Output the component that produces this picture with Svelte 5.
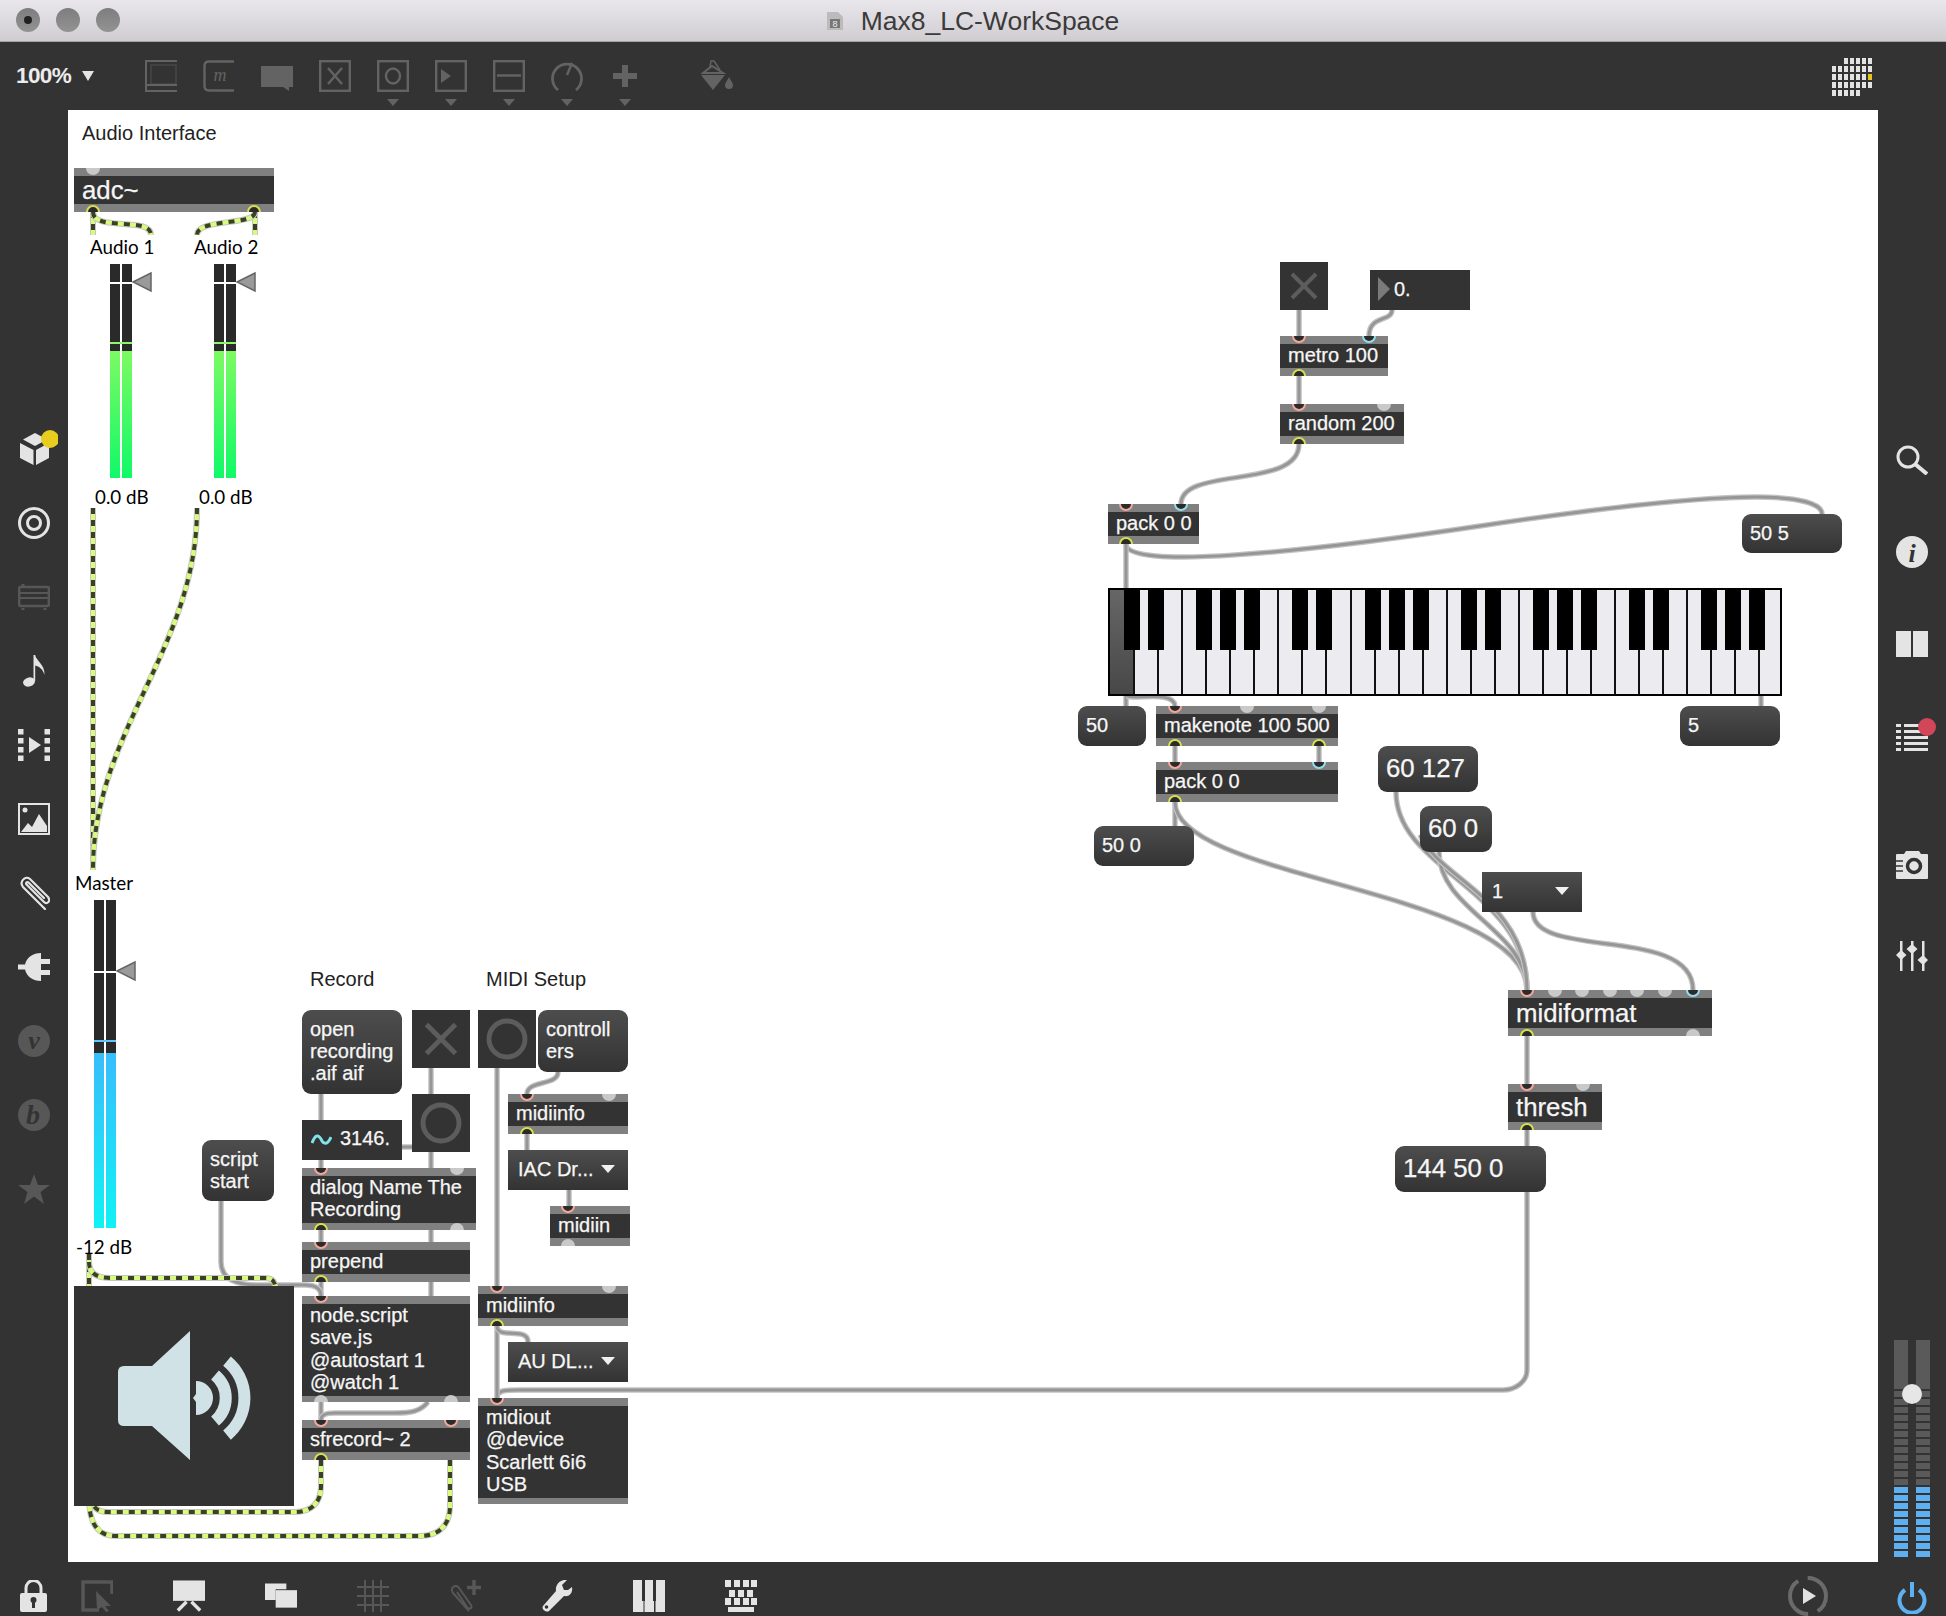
<script>
  // canvas starts at 68,110 on the page, all patcher coords below are page coords
  const OX = 68;
  const OY = 110;

  const boxes = [
    { t: 'adc~', x: 74, y: 168, w: 200, h: 44, big: true, ins: [[93, 'g']], outs: [[93, 'y'], [254, 'y']] },
    { t: 'metro 100', x: 1280, y: 336, w: 108, h: 40, ins: [[1299, 'p'], [1369, 'b']], outs: [[1299, 'y']] },
    { t: 'random 200', x: 1280, y: 404, w: 124, h: 40, ins: [[1299, 'p'], [1384, 'g']], outs: [[1299, 'y']] },
    { t: 'pack 0 0', x: 1108, y: 504, w: 91, h: 40, ins: [[1126, 'p'], [1181, 'b']], outs: [[1126, 'y']] },
    { t: 'makenote 100 500', x: 1156, y: 706, w: 182, h: 40, ins: [[1175, 'p'], [1247, 'g'], [1319, 'g']], outs: [[1175, 'y'], [1319, 'y']] },
    { t: 'pack 0 0', x: 1156, y: 762, w: 182, h: 40, ins: [[1175, 'p'], [1319, 'b']], outs: [[1175, 'y']] },
    { t: 'midiformat', x: 1508, y: 990, w: 204, h: 46, big: true, ins: [[1527, 'p'], [1555, 'g'], [1582, 'g'], [1610, 'g'], [1637, 'g'], [1665, 'g'], [1693, 'b']], outs: [[1527, 'y'], [1693, 'g']] },
    { t: 'thresh', x: 1508, y: 1084, w: 94, h: 46, big: true, ins: [[1527, 'p'], [1583, 'g']], outs: [[1527, 'y']] },
    { t: 'dialog Name The\nRecording', x: 302, y: 1168, w: 174, h: 62, ins: [[321, 'p'], [457, 'g']], outs: [[321, 'y'], [457, 'g']] },
    { t: 'prepend', x: 302, y: 1242, w: 168, h: 40, ins: [[321, 'p']], outs: [[321, 'y']] },
    { t: 'node.script\nsave.js\n@autostart 1\n@watch 1', x: 302, y: 1296, w: 168, h: 106, ins: [[321, 'p']], outs: [[321, 'g'], [451, 'g']] },
    { t: 'sfrecord~ 2', x: 302, y: 1420, w: 168, h: 40, ins: [[321, 'p'], [451, 'p']], outs: [[321, 'y']] },
    { t: 'midiinfo', x: 508, y: 1094, w: 120, h: 40, ins: [[527, 'p'], [609, 'g']], outs: [[527, 'y']] },
    { t: 'midiin', x: 550, y: 1206, w: 80, h: 40, ins: [[568, 'p']], outs: [[568, 'g']] },
    { t: 'midiinfo', x: 478, y: 1286, w: 150, h: 40, ins: [[497, 'p'], [609, 'g']], outs: [[497, 'y']] },
    { t: 'midiout\n@device\nScarlett 6i6\nUSB', x: 478, y: 1398, w: 150, h: 106, ins: [[497, 'p']], outs: [] }
  ];

  const messages = [
    { t: 'open\nrecording\n.aif aif', x: 302, y: 1010, w: 100, h: 84 },
    { t: 'controll\ners', x: 538, y: 1010, w: 90, h: 62 },
    { t: 'script\nstart', x: 202, y: 1140, w: 72, h: 61 },
    { t: '50 5', x: 1742, y: 514, w: 100, h: 39 },
    { t: '50', x: 1078, y: 706, w: 68, h: 40 },
    { t: '5', x: 1680, y: 706, w: 100, h: 40 },
    { t: '50 0', x: 1094, y: 826, w: 100, h: 40 },
    { t: '60 127', x: 1378, y: 746, w: 100, h: 46, big: true },
    { t: '60 0', x: 1420, y: 806, w: 72, h: 46, big: true },
    { t: '144 50 0', x: 1395, y: 1146, w: 151, h: 46, big: true }
  ];

  const menus = [
    { t: 'IAC Dr...', x: 508, y: 1150, w: 120, h: 40 },
    { t: 'AU DL...', x: 508, y: 1342, w: 120, h: 40 },
    { t: '1', x: 1482, y: 872, w: 100, h: 40 }
  ];

  const toggles = [
    { x: 412, y: 1010, s: 58 },
    { x: 1280, y: 262, s: 48 }
  ];
  const bangs = [
    { x: 478, y: 1010, s: 58 },
    { x: 412, y: 1094, s: 58 }
  ];

  const labels = [
    { t: 'Audio Interface', x: 82, y: 133 },
    { t: 'Record', x: 310, y: 979 },
    { t: 'MIDI Setup', x: 486, y: 979 },
    { t: 'Audio 1', x: 90, y: 247, gain: true },
    { t: 'Audio 2', x: 194, y: 247, gain: true },
    { t: '0.0 dB', x: 95, y: 497, gain: true },
    { t: '0.0 dB', x: 199, y: 497, gain: true },
    { t: 'Master', x: 75, y: 883, gain: true },
    { t: '-12 dB', x: 76, y: 1247, gain: true }
  ];

  const meters = [
    { x: 110, top: 264, bottom: 478, fill: 351, mark: 282, peak: 342, kind: 'green' },
    { x: 214, top: 264, bottom: 478, fill: 351, mark: 282, peak: 342, kind: 'green' },
    { x: 94, top: 900, bottom: 1228, fill: 1053, mark: 971, peak: 1040, kind: 'cyan' }
  ];

  const cords = [
    'M1299 310V336',
    'M1369 336C1369 315 1392 322 1392 310',
    'M1299 376V404',
    'M1299 444C1299 490 1181 466 1181 504',
    'M1126 544C1126 570 1300 553 1480 526C1620 505 1700 497 1757 497C1800 497 1822 504 1822 514',
    'M1126 544V706',
    'M1127 696C1135 700 1174 690 1175 706',
    'M1761 696V706',
    'M1175 746V762',
    'M1319 746V762',
    'M1175 802V830',
    'M1175 802C1175 880 1527 890 1527 990',
    'M1396 792C1396 870 1527 890 1527 990',
    'M1439 852C1439 910 1527 930 1527 990',
    'M1420 835C1440 880 1527 900 1527 990',
    'M1533 912C1533 960 1693 925 1693 990',
    'M1527 1036V1084',
    'M1527 1130V1370C1527 1382 1515 1390 1503 1390H520C505 1390 497 1390 497 1398',
    'M321 1094V1168',
    'M431 1068V1296',
    'M402 1147H412',
    'M321 1230V1242',
    'M321 1282V1296',
    'M221 1201V1262C221 1280 238 1285 258 1285H305C318 1285 321 1290 321 1296',
    'M321 1402V1420',
    'M428 1402C420 1412 410 1413 395 1413H335C325 1413 321 1415 321 1420',
    'M497 1068V1286',
    'M558 1072C558 1086 527 1080 527 1094',
    'M527 1134V1150',
    'M569 1190V1206',
    'M497 1326V1398',
    'M497 1326C497 1340 528 1326 528 1342'
  ];

  const signals = [
    'M93 212V235',
    'M93 212C93 232 151 216 151 235',
    'M255 212V235',
    'M255 212C255 226 197 218 197 235',
    'M93 508V870',
    'M197 508C197 650 93 730 93 870',
    'M89 1254V1296',
    'M89 1262C89 1274 98 1278 110 1278H264C273 1278 276 1280 276 1296',
    'M321 1460V1486C321 1504 310 1512 295 1512H108C98 1512 92 1508 92 1498',
    'M450 1460V1506C450 1526 438 1536 420 1536H116C98 1536 89 1524 89 1498'
  ];

  // black keys repeat over the 7 white keys of an octave
  const whiteW = 24.05;
  const whites = Array.from({ length: 28 }, (_, i) => i);
  const blacks = whites.filter((k) => [1, 2, 4, 5, 6].includes(k % 7));

  const railSegs = Array.from({ length: 21 }, (_, i) => i);
  const grid = [
    [0, 0, 1, 1, 1, 1, 1],
    [1, 1, 1, 1, 1, 1, 1],
    [1, 1, 1, 1, 1, 1, 2],
    [1, 1, 1, 1, 1, 1, 1],
    [1, 1, 1, 1, 1, 0, 0]
  ];
</script>

<div class="app">
  <header class="titlebar">
    <div class="lights">
      <span class="light"><i></i></span>
      <span class="light"></span>
      <span class="light"></span>
    </div>
    <div class="title">
      <svg class="docicon" viewBox="0 0 16 18" width="16" height="18">
        <path d="M0 0H11L16 5V18H0Z" fill="#bbb" />
        <rect x="3" y="7" width="10" height="9" fill="#777" />
        <text x="8" y="15" font-size="9" text-anchor="middle" fill="#eee" font-family="Liberation Sans">8</text>
      </svg>
      <span>Max8_LC-WorkSpace</span>
    </div>
  </header>

  <div class="toolbar">
    <div class="zoomlevel"><span>100%</span><i></i></div>
    <div class="tool">
      <svg viewBox="0 0 32 32" fill="none" stroke="currentColor" stroke-width="2">
        <path d="M6 5H31V24H6Z" stroke="#474747" stroke-width="1.500" />
        <path d="M1 0V32M1 1H32M1 25H32M1 31H32" />
      </svg>
    </div>
    <div class="tool">
      <svg viewBox="0 0 32 32" fill="none" stroke="currentColor" stroke-width="2.400">
        <path d="M31 1.5H6Q1.5 1.500 1.500 6V26Q1.500 30.500 6 30.500H31" />
        <text x="17" y="21" font-size="18" text-anchor="middle" font-style="italic" fill="currentColor" stroke="none" font-family="Liberation Serif">m</text>
      </svg>
    </div>
    <div class="tool">
      <svg viewBox="0 0 32 32" fill="currentColor"><path d="M0 6H32V27H28V31L22 27H0Z" /></svg>
    </div>
    <div class="tool">
      <svg viewBox="0 0 32 32" fill="none" stroke="currentColor" stroke-width="2.400">
        <rect x="1.200" y="1.200" width="29.600" height="29.600" />
        <path d="M9 8L23 24M23 8L9 24" />
      </svg>
    </div>
    <div class="tool">
      <svg viewBox="0 0 32 32" fill="none" stroke="currentColor" stroke-width="2.400">
        <rect x="1.200" y="1.200" width="29.600" height="29.600" />
        <ellipse cx="16" cy="16" rx="7" ry="7.500" />
      </svg>
      <i class="caret"></i>
    </div>
    <div class="tool">
      <svg viewBox="0 0 32 32" fill="none" stroke="currentColor" stroke-width="2.400">
        <rect x="1.200" y="1.200" width="29.600" height="29.600" />
        <path d="M6 9L16 16L6 23Z" fill="currentColor" stroke="none" />
      </svg>
      <i class="caret"></i>
    </div>
    <div class="tool">
      <svg viewBox="0 0 32 32" fill="none" stroke="currentColor" stroke-width="2.400">
        <rect x="1.200" y="1.200" width="29.600" height="29.600" />
        <path d="M4 15.500H28" />
      </svg>
      <i class="caret"></i>
    </div>
    <div class="tool">
      <svg viewBox="0 0 32 32" fill="none" stroke="currentColor" stroke-width="2.800">
        <path d="M7 30A14.500 14.500 0 1 1 25 30" />
        <path d="M16 15L21 3" stroke-width="2.400" />
      </svg>
      <i class="caret"></i>
    </div>
    <div class="tool">
      <svg viewBox="0 0 32 32" fill="currentColor"><path d="M13 5H19V13H28V19H19V27H13V19H4V13H13Z" /></svg>
      <i class="caret"></i>
    </div>
    <div class="tool bucket">
      <svg viewBox="0 0 32 32">
        <path d="M0 15L12 30L24 15Z" fill="currentColor" />
        <path d="M2 13L11 6L22 13Z" fill="none" stroke="currentColor" stroke-width="2" />
        <path d="M9 7L10 1L13 1L19 10" fill="none" stroke="currentColor" stroke-width="1.500" />
        <path d="M28 17C30 21 32 23 32 25A4 4 0 0 1 24 25C24 23 26 21 28 17Z" fill="currentColor" />
      </svg>
    </div>
    <div class="gridmeter">
      {#each grid as row}
        <div class="gridrow">
          {#each row as cell}
            <span class="cell" class:off={cell === 0} class:hot={cell === 2}></span>
          {/each}
        </div>
      {/each}
    </div>
  </div>

  <div class="middle">
    <nav class="rail left">
      <div class="slot">
        <svg width="48" height="48" viewBox="0 0 48 48" fill="currentColor">
          <path d="M25 8L37 14.500L25 21L13 14.500Z" />
          <path d="M10 18L23.500 25V40L10 33Z" />
          <path d="M39 18L26 25V40L39 33Z" />
          <circle cx="40" cy="14" r="9" fill="#e8cc1f" />
        </svg>
      </div>
      <div class="slot">
        <svg width="32" height="32" viewBox="0 0 32 32" fill="none" stroke="currentColor" stroke-width="3">
          <circle cx="16" cy="16" r="14.500" />
          <circle cx="16" cy="16" r="6.500" />
        </svg>
      </div>
      <div class="slot dim">
        <svg width="32" height="26" viewBox="0 0 32 26" fill="none" stroke="currentColor" stroke-width="2.400">
          <rect x="1.200" y="3" width="29.600" height="19" rx="1" />
          <path d="M1 9H31M1 14H31" stroke-width="1.800" />
          <path d="M5 2V0M5 26V24M27 26V24" stroke-width="3" />
        </svg>
      </div>
      <div class="slot">
        <svg width="22" height="32" viewBox="0 0 22 32" fill="currentColor">
          <ellipse cx="6" cy="27" rx="6" ry="4.500" transform="rotate(-15 6 27)" />
          <path d="M10.500 26V0H12.200C13 6 22 9 21.500 20C20 14 16 11.500 12.200 10.500V26Z" />
        </svg>
      </div>
      <div class="slot">
        <svg width="32" height="32" viewBox="0 0 32 32" fill="currentColor">
          <path d="M0 0h5.500v5.500H0ZM0 9h5.500v5.500H0ZM0 18h5.500v5.500H0ZM0 26.500h5.500V32H0Z" />
          <path d="M26.500 0H32v5.500h-5.500ZM26.500 9H32v5.500h-5.500ZM26.500 18H32v5.500h-5.500ZM26.500 26.500H32V32h-5.500Z" />
          <path d="M11 8L23 16L11 24Z" />
        </svg>
      </div>
      <div class="slot">
        <svg width="32" height="32" viewBox="0 0 32 32">
          <rect x="1" y="1" width="30" height="30" fill="none" stroke="currentColor" stroke-width="2" />
          <circle cx="7" cy="7" r="2.500" fill="currentColor" />
          <path d="M3 29L10 20L14 24L21 11L29 23V29Z" fill="currentColor" />
        </svg>
      </div>
      <div class="slot">
        <svg width="32" height="34" viewBox="0 0 32 34" fill="none" stroke="currentColor" stroke-width="2.200">
          <path d="M27 33L5 11C1 6 7 -1 12 3L30 21C33 25 29 29 26 26L9 9C7 7 9 5 11 7L26 22" stroke-linecap="round" />
        </svg>
      </div>
      <div class="slot">
        <svg width="32" height="32" viewBox="0 0 32 32" fill="currentColor">
          <path d="M0 13.500H7C9 6 15 2 23 2V8H32V13H23V19H32V24H23V30C15 30 9 26 7 18.500H0Z" />
        </svg>
      </div>
      <div class="slot dim">
        <svg width="32" height="32" viewBox="0 0 32 32">
          <circle cx="16" cy="16" r="16" fill="currentColor" />
          <text x="16" y="24" font-size="26" font-weight="700" font-style="italic" text-anchor="middle" fill="#333" font-family="Liberation Serif">v</text>
        </svg>
      </div>
      <div class="slot dim">
        <svg width="32" height="32" viewBox="0 0 32 32">
          <circle cx="16" cy="16" r="16" fill="currentColor" />
          <text x="15" y="25" font-size="28" font-weight="700" font-style="italic" text-anchor="middle" fill="#333" font-family="Liberation Serif">b</text>
        </svg>
      </div>
      <div class="slot dim">
        <svg width="32" height="30" viewBox="0 0 32 30" fill="currentColor">
          <path d="M16 0L20 11H32L22.500 18L26 30L16 22.500L6 30L9.500 18L0 11H12Z" />
        </svg>
      </div>
    </nav>

    <main class="canvas">
      {#each labels as l}
        <span class="label" class:gain={l.gain} style="left:{l.x - OX}px;top:{l.y - OY}px">{l.t}</span>
      {/each}

      <svg class="cords" viewBox="{OX} {OY} 1810 1452" fill="none">
        {#each cords as d}
          <path {d} stroke="#c2c2c2" stroke-width="5.500" />
          <path {d} stroke="#969696" stroke-width="3" />
        {/each}
        {#each signals as d}
          <path {d} stroke="#c6c6c6" stroke-width="6" />
          <path {d} stroke="#d8fb7d" stroke-width="4" />
          <path {d} stroke="#3a4026" stroke-width="4" stroke-dasharray="6 6" />
        {/each}
      </svg>

      {#each meters as m}
        <div class="meter" style="left:{m.x - OX}px;top:{m.top - OY}px;height:{m.bottom - m.top}px">
          <div class="bar"><div class="fill {m.kind}" style="height:{m.bottom - m.fill}px"></div></div>
          <div class="bar"><div class="fill {m.kind}" style="height:{m.bottom - m.fill}px"></div></div>
          <i class="mark" style="top:{m.mark - m.top}px"></i>
          <i class="peak {m.kind}" style="top:{m.peak - m.top}px"></i>
          <svg class="thumb" style="top:{m.mark - m.top - 11}px" width="20" height="22" viewBox="0 0 20 22">
            <path d="M1 11L19 2V20Z" fill="#9a9a9a" stroke="#666" stroke-width="1.500" />
          </svg>
        </div>
      {/each}

      {#each boxes as b}
        <div class="box" class:big={b.big} style="left:{b.x - OX}px;top:{b.y - OY}px;width:{b.w}px;height:{b.h}px">
          <div class="boxtext">{b.t}</div>
          {#each b.ins as [px, c]}
            <i class="port in {c}" style="left:{px - b.x}px"></i>
          {/each}
          {#each b.outs as [px, c]}
            <i class="port out {c}" style="left:{px - b.x}px"></i>
          {/each}
        </div>
      {/each}

      {#each messages as m}
        <div class="msg" class:big={m.big} style="left:{m.x - OX}px;top:{m.y - OY}px;width:{m.w}px;height:{m.h}px">{m.t}</div>
      {/each}

      {#each menus as m}
        <div class="menu" style="left:{m.x - OX}px;top:{m.y - OY}px;width:{m.w}px;height:{m.h}px">
          <span>{m.t}</span><i></i>
        </div>
      {/each}

      {#each toggles as g}
        <div class="square" style="left:{g.x - OX}px;top:{g.y - OY}px;width:{g.s}px;height:{g.s}px">
          <svg viewBox="0 0 100 100"><path d="M25 25L75 75M75 25L25 75" stroke="#5c5c5c" stroke-width="8.500" /></svg>
        </div>
      {/each}
      {#each bangs as g}
        <div class="square" style="left:{g.x - OX}px;top:{g.y - OY}px;width:{g.s}px;height:{g.s}px">
          <svg viewBox="0 0 100 100"><circle cx="50" cy="50" r="31" fill="none" stroke="#5c5c5c" stroke-width="8.500" /></svg>
        </div>
      {/each}

      <div class="flonum" style="left:{1370 - OX}px;top:{270 - OY}px">
        <i></i><span>0.</span>
      </div>

      <div class="signum" style="left:{302 - OX}px;top:{1120 - OY}px">
        <svg width="21" height="14" viewBox="0 0 21 14" fill="none" stroke="#7fe3ea" stroke-width="3">
          <path d="M1 10C4 2 7 1 10 6C12 11 16 13 20 4" />
        </svg>
        <span>3146.</span>
      </div>

      <div class="keys" style="left:{1108 - OX}px;top:{588 - OY}px">
        <div class="pressed"></div>
        {#each whites as k}
          {#if k > 0}<i class="wline" style="left:{k * whiteW - 1}px"></i>{/if}
        {/each}
        {#each blacks as k}
          <i class="bkey" style="left:{k * whiteW - 10}px"></i>
        {/each}
      </div>

      <div class="dac" style="left:{74 - OX}px;top:{1286 - OY}px">
        <svg width="220" height="220" viewBox="0 0 220 220" fill="none">
          <path d="M78 80L116 45V174L78 140H50Q44 140 44 134V86Q44 80 50 80Z" fill="#d0e2e6" />
          <path d="M153 75A48 48 0 0 1 153 149" stroke="#d0e2e6" stroke-width="12" />
          <path d="M141 89A30 30 0 0 1 141 135" stroke="#d0e2e6" stroke-width="12" />
          <path d="M122 95A17 17 0 0 1 122 129L122 116L119 112L122 108Z" fill="#d0e2e6" />
        </svg>
      </div>
    </main>

    <aside class="rail right">
      <div class="rslot">
        <svg width="32" height="30" viewBox="0 0 32 30" fill="none" stroke="currentColor" stroke-width="3">
          <circle cx="12" cy="12" r="10" />
          <path d="M19 19L31 29" stroke-width="4" />
        </svg>
      </div>
      <div class="rslot">
        <svg width="32" height="32" viewBox="0 0 32 32">
          <circle cx="16" cy="16" r="16" fill="currentColor" />
          <text x="16" y="26" font-size="26" font-weight="700" font-style="italic" text-anchor="middle" fill="#333" font-family="Liberation Serif">i</text>
        </svg>
      </div>
      <div class="rslot">
        <svg width="32" height="26" viewBox="0 0 32 26" fill="currentColor">
          <rect x="0" y="0" width="15" height="26" />
          <rect x="17" y="0" width="15" height="26" />
        </svg>
      </div>
      <div class="rslot badge">
        <svg width="40" height="36" viewBox="0 0 40 36" fill="currentColor">
          <path d="M0 6h5v3H0ZM0 12h5v3H0ZM0 18h5v3H0ZM0 24h5v3H0ZM0 30h5v3H0Z" />
          <path d="M8 6h24v3H8ZM8 12h24v3H8ZM8 18h24v3H8ZM8 24h24v3H8ZM8 30h24v3H8Z" />
          <circle cx="31" cy="9" r="9" fill="#d2465a" />
        </svg>
      </div>
      <div class="rslot spaced">
        <svg width="32" height="32" viewBox="0 0 32 32">
          <path d="M1 6H8L10 3H23L25 6H31Q32 6 32 7V30Q32 31 31 31H1Q0 31 0 30V7Q0 6 1 6Z" fill="currentColor" />
          <circle cx="18" cy="18" r="6.500" fill="none" stroke="#333" stroke-width="3.500" />
          <path d="M0 13H7M0 18H7M0 23H7" stroke="#333" stroke-width="1.500" />
        </svg>
      </div>
      <div class="rslot">
        <svg width="32" height="30" viewBox="0 0 32 30" fill="currentColor">
          <path d="M4 0h2.500v30H4ZM15 0h2.500v30H15ZM26 0h2.500v30H26Z" />
          <path d="M5 9L10.500 14L5 19L0 14ZM16 3L21.500 8L16 13L10.500 8ZM27 14L32 19L27 24L21.500 19Z" />
        </svg>
      </div>
      <div class="levels">
        <div class="lvcol">
          <div class="lvtop"></div>
          {#each railSegs as i}
            <span class="seg" class:lit={i >= 12}></span>
          {/each}
        </div>
        <div class="lvcol">
          <div class="lvtop"></div>
          {#each railSegs as i}
            <span class="seg" class:lit={i >= 12}></span>
          {/each}
        </div>
        <i class="knob"></i>
      </div>
    </aside>
  </div>

  <footer class="bottombar">
    <div class="bt lock">
      <svg width="27" height="32" viewBox="0 0 27 32">
        <path d="M6 14V8A7.500 7.500 0 0 1 21 8V14" fill="none" stroke="currentColor" stroke-width="3" />
        <rect x="0" y="13" width="27" height="19" rx="2" fill="currentColor" />
        <circle cx="13.500" cy="20" r="3" fill="#333" />
        <rect x="12" y="20" width="3" height="8" fill="#333" />
      </svg>
    </div>
    <div class="bt dim">
      <svg width="32" height="32" viewBox="0 0 32 32">
        <path d="M31 14V2H2V30H18" fill="none" stroke="currentColor" stroke-width="3.500" />
        <path d="M15 11L30 26H24L28 31L25 32L21 27L16 30Z" fill="currentColor" />
      </svg>
    </div>
    <div class="bt">
      <svg width="32" height="32" viewBox="0 0 33 32">
        <rect x="0" y="0" width="33" height="21" fill="currentColor" />
        <path d="M14 22L5 31M19 22L28 31" stroke="currentColor" stroke-width="3.500" />
      </svg>
    </div>
    <div class="bt">
      <svg width="32" height="32" viewBox="0 0 33 32" fill="currentColor">
        <path d="M0 3H22V9H11V20H0Z" />
        <rect x="11" y="10" width="22" height="18" />
      </svg>
    </div>
    <div class="bt dim">
      <svg width="32" height="32" viewBox="0 0 32 32" stroke="currentColor" stroke-width="2">
        <path d="M8 0V32M16 0V32M24 0V32M0 7H32M0 16H32M0 25H32" />
      </svg>
    </div>
    <div class="bt dim">
      <svg width="32" height="32" viewBox="0 0 32 32" fill="none" stroke="currentColor" stroke-width="2">
        <path d="M20 31L4 13C0 8 7 3 10 8L22 25C24 28 20 30 18 27L8 12" />
        <path d="M25 0V15M18 7.500H32" stroke-width="3.500" />
      </svg>
    </div>
    <div class="bt">
      <svg width="32" height="32" viewBox="0 0 32 32" fill="currentColor">
        <path d="M31 7C32 12 29 17 23 16L8 31C5 33 0 29 2 26L15 11C14 5 19 -1 26 0L21 5L23 10L27 10Z" />
        <circle cx="5.500" cy="27" r="1.800" fill="#333" />
      </svg>
    </div>
    <div class="bt">
      <svg width="32" height="32" viewBox="0 0 32 32" fill="currentColor">
        <path d="M0 0H9V21H10.500V32H0ZM12 0H20V21H21V32H11.500V21H12ZM23 0H32V32H22.500V21H23Z" />
      </svg>
    </div>
    <div class="bt">
      <svg width="32" height="32" viewBox="0 0 32 32" fill="currentColor">
        <path d="M0 0h6v7H0ZM9 0h6v7H9ZM18 0h6v7h-6ZM26 0h6v7h-6Z" />
        <path d="M4 10h6v7H4ZM13 10h6v7h-6ZM22 10h6v7h-6Z" />
        <path d="M0 18h6v7H0ZM9 18h6v7H9ZM18 18h6v7h-6ZM26 18h6v7h-6Z" />
        <path d="M3 27h26v5H3Z" />
      </svg>
    </div>
    <div class="bt play">
      <svg width="42" height="42" viewBox="0 0 42 42" fill="none">
        <path d="M21 3A18 18 0 0 1 39 21A18 18 0 0 1 21 39A18 18 0 0 1 3 21A18 18 0 0 1 21 3" stroke="#6a6a6a" stroke-width="4" stroke-dasharray="46 10" />
        <path d="M16 13L29 21L16 29Z" fill="#e2e2e2" />
      </svg>
    </div>
    <div class="bt power">
      <svg width="30" height="32" viewBox="0 0 30 32" fill="none" stroke="#5fb0f0" stroke-width="4">
        <path d="M8 8A12.500 12.500 0 1 0 22 8" />
        <path d="M15 0V15" />
      </svg>
    </div>
  </footer>
</div>

<style>
  :global(body) {
    margin: 0;
    background: #333;
  }

  .app {
    width: 1946px;
    height: 1616px;
    display: flex;
    flex-direction: column;
    background: #333;
    font-family: 'Liberation Sans', Arial, sans-serif;
    overflow: hidden;
  }

  .titlebar {
    height: 41px;
    flex: none;
    position: relative;
    display: flex;
    align-items: center;
    justify-content: center;
    background: linear-gradient(#e9e7ec, #cfcdd0);
    border-bottom: 1px solid #a3a3a3;
  }
  .lights {
    position: absolute;
    left: 16px;
    top: 8px;
    display: flex;
    gap: 16px;
  }
  .light {
    width: 24px;
    height: 24px;
    border-radius: 50%;
    background: linear-gradient(#7d7d7d, #939393);
    display: flex;
    align-items: center;
    justify-content: center;
  }
  .light i {
    width: 8px;
    height: 8px;
    border-radius: 50%;
    background: #222;
  }
  .title {
    display: flex;
    align-items: center;
    gap: 18px;
    font-size: 26.5px;
    color: #3b3b3b;
    margin-top: 1px;
  }

  .toolbar {
    height: 68px;
    flex: none;
    display: flex;
    padding-top: 18px;
    box-sizing: border-box;
    color: #636363;
    gap: 26px;
    position: relative;
  }
  .zoomlevel {
    width: 145px;
    margin-right: -26px;
    box-sizing: border-box;
    padding-left: 16px;
    display: flex;
    align-items: center;
    height: 32px;
    color: #ececec;
    font-size: 22.500px;
    font-weight: 700;
    letter-spacing: -0.6px;
  }
  .zoomlevel i {
    margin-left: 11px;
    border-left: 6px solid transparent;
    border-right: 6px solid transparent;
    border-top: 10px solid #e4e4e4;
  }
  .tool {
    width: 32px;
    height: 32px;
    position: relative;
  }
  .tool svg {
    display: block;
    width: 32px;
    height: 32px;
  }
  .caret {
    position: absolute;
    left: 10px;
    top: 39px;
    border-left: 6px solid transparent;
    border-right: 6px solid transparent;
    border-top: 7px solid #636363;
  }
  .bucket {
    margin-left: 34px;
  }
  .gridmeter {
    margin-left: auto;
    margin-right: 74px;
    margin-top: -2px;
    display: flex;
    flex-direction: column;
    gap: 2px;
  }
  .gridrow {
    display: flex;
    gap: 2px;
  }
  .cell {
    width: 4px;
    height: 6px;
    background: #e2e2e2;
  }
  .cell.off {
    background: transparent;
  }
  .cell.hot {
    background: #e8c21f;
  }

  .middle {
    flex: 1;
    display: flex;
    min-height: 0;
  }
  .rail {
    width: 68px;
    flex: none;
    display: flex;
    flex-direction: column;
    align-items: center;
    color: #e4e4e4;
    box-sizing: border-box;
  }
  .rail.left {
    padding-top: 302px;
  }
  .rail.right {
    padding-top: 304px;
  }
  .slot {
    height: 74px;
    flex: none;
    display: flex;
    align-items: center;
    justify-content: center;
  }
  .slot.dim,
  .bt.dim {
    color: #575757;
  }
  .rslot {
    height: 92px;
    flex: none;
    display: flex;
    align-items: center;
    justify-content: center;
  }
  .rslot.badge svg {
    margin-left: 8px;
  }
  .rslot.spaced {
    margin-top: 36px;
  }

  .canvas {
    flex: 1;
    position: relative;
    background: #fff;
    overflow: hidden;
  }
  .cords {
    position: absolute;
    inset: 0;
    width: 100%;
    height: 100%;
  }
  .label {
    position: absolute;
    transform: translateY(-50%);
    font-size: 20px;
    line-height: 24px;
    color: #222;
    white-space: nowrap;
  }
  .label.gain {
    font-family: Lato, sans-serif;
    font-size: 18.800px;
    color: #000;
  }

  .box {
    position: absolute;
    display: flex;
    flex-direction: column;
    background: #808080;
    overflow: hidden;
    color: #f6f6f6;
    font-size: 20px;
  }
  .box.big,
  .msg.big {
    font-size: 25.800px;
  }
  .boxtext {
    flex: 1;
    margin: 8px 0;
    padding: 0 8px 2px;
    background: #333;
    display: flex;
    align-items: center;
    white-space: pre;
    line-height: 22.400px;
    -webkit-text-stroke: 0.25px #f6f6f6;
  }
  .box.big .boxtext {
    padding-bottom: 0;
  }
  .port {
    position: absolute;
    box-sizing: border-box;
    width: 14px;
    height: 14px;
    margin-left: -7px;
    border-radius: 50%;
    background: #2b2b2b;
    border: 2px solid #f2a89a;
  }
  .port.in {
    top: -7px;
  }
  .port.out {
    bottom: -7px;
  }
  .port.b {
    border-color: #95dcec;
  }
  .port.y {
    border-color: #d8e04e;
  }
  .port.g {
    background: #c9c9c9;
    border-color: #c9c9c9;
  }

  .msg {
    position: absolute;
    box-sizing: border-box;
    padding: 0 8px 2px;
    display: flex;
    align-items: center;
    border-radius: 9px;
    background: linear-gradient(#4d4d4d, #333);
    color: #f6f6f6;
    font-size: 20px;
    line-height: 22px;
    white-space: pre;
    -webkit-text-stroke: 0.25px #f6f6f6;
  }
  .menu {
    position: absolute;
    box-sizing: border-box;
    padding: 0 13px 2px 10px;
    display: flex;
    align-items: center;
    justify-content: space-between;
    background: linear-gradient(#4d4d4d, #333);
    color: #f6f6f6;
    font-size: 20px;
    -webkit-text-stroke: 0.25px #f6f6f6;
  }
  .menu i {
    border-left: 7px solid transparent;
    border-right: 7px solid transparent;
    border-top: 8px solid #f0f0f0;
  }
  .square {
    position: absolute;
    background: #333;
  }
  .square svg {
    display: block;
    width: 100%;
    height: 100%;
  }
  .flonum {
    position: absolute;
    width: 100px;
    height: 40px;
    box-sizing: border-box;
    padding: 0 0 2px 8px;
    display: flex;
    align-items: center;
    gap: 4px;
    background: #333;
    color: #f6f6f6;
    font-size: 20px;
    -webkit-text-stroke: 0.25px #f6f6f6;
  }
  .flonum i {
    border-top: 12px solid transparent;
    border-bottom: 12px solid transparent;
    border-left: 12px solid #7a7a7a;
  }
  .signum {
    position: absolute;
    width: 100px;
    height: 40px;
    box-sizing: border-box;
    padding-left: 9px;
    display: flex;
    align-items: center;
    gap: 8px;
    background: #333;
    color: #f6f6f6;
    font-size: 20px;
    -webkit-text-stroke: 0.25px #f6f6f6;
  }
  .signum span {
    margin-top: -4px;
  }

  .meter {
    position: absolute;
    display: flex;
    gap: 2px;
  }
  .bar {
    width: 10px;
    background: #2a2a2a;
    position: relative;
  }
  .fill {
    position: absolute;
    left: 0;
    right: 0;
    bottom: 0;
  }
  .fill.green {
    background: linear-gradient(#7dfa62, #10f968);
  }
  .fill.cyan {
    background: linear-gradient(#38bdfc, #10f2f4);
  }
  .mark,
  .peak {
    position: absolute;
    left: 0;
    right: 0;
    height: 2px;
    background: #fff;
  }
  .peak.green {
    background: #8cf76a;
  }
  .peak.cyan {
    background: #5ec6fa;
  }
  .thumb {
    position: absolute;
    left: 22px;
  }

  .keys {
    position: absolute;
    width: 674px;
    height: 108px;
    box-sizing: border-box;
    border: 2px solid #000;
    background: #ebebf0;
  }
  .pressed {
    position: absolute;
    left: 0;
    top: 0;
    bottom: 0;
    width: 23px;
    background: linear-gradient(#666, #484848);
  }
  .wline {
    position: absolute;
    top: 0;
    bottom: 0;
    width: 2px;
    background: #111;
  }
  .bkey {
    position: absolute;
    top: 0;
    width: 16px;
    height: 60px;
    background: #000;
  }

  .dac {
    position: absolute;
    width: 220px;
    height: 220px;
    background: #333;
  }
  .dac svg {
    display: block;
  }

  .levels {
    margin-top: auto;
    margin-bottom: 5px;
    position: relative;
    display: flex;
    gap: 8px;
  }
  .lvcol {
    width: 14px;
    display: flex;
    flex-direction: column;
    gap: 2px;
  }
  .lvtop {
    height: 49px;
    background: #5a5a5a;
  }
  .seg {
    height: 6px;
    background: #5a5a5a;
  }
  .seg.lit {
    background: #5fb0f0;
  }
  .knob {
    position: absolute;
    left: 8px;
    top: 44px;
    width: 20px;
    height: 20px;
    border-radius: 50%;
    background: #e6e6e6;
  }

  .bottombar {
    height: 54px;
    flex: none;
    box-sizing: border-box;
    padding: 18px 0 0 20px;
    display: flex;
    color: #e4e4e4;
    gap: 60px;
  }
  .bt svg {
    display: block;
  }
  .bt.lock {
    margin-right: -26px;
  }
  .bt.play {
    margin-left: auto;
    margin-top: -5px;
    margin-right: 8px;
  }
  .bt.power {
    margin-right: 19px;
    margin-top: 2px;
  }
</style>
